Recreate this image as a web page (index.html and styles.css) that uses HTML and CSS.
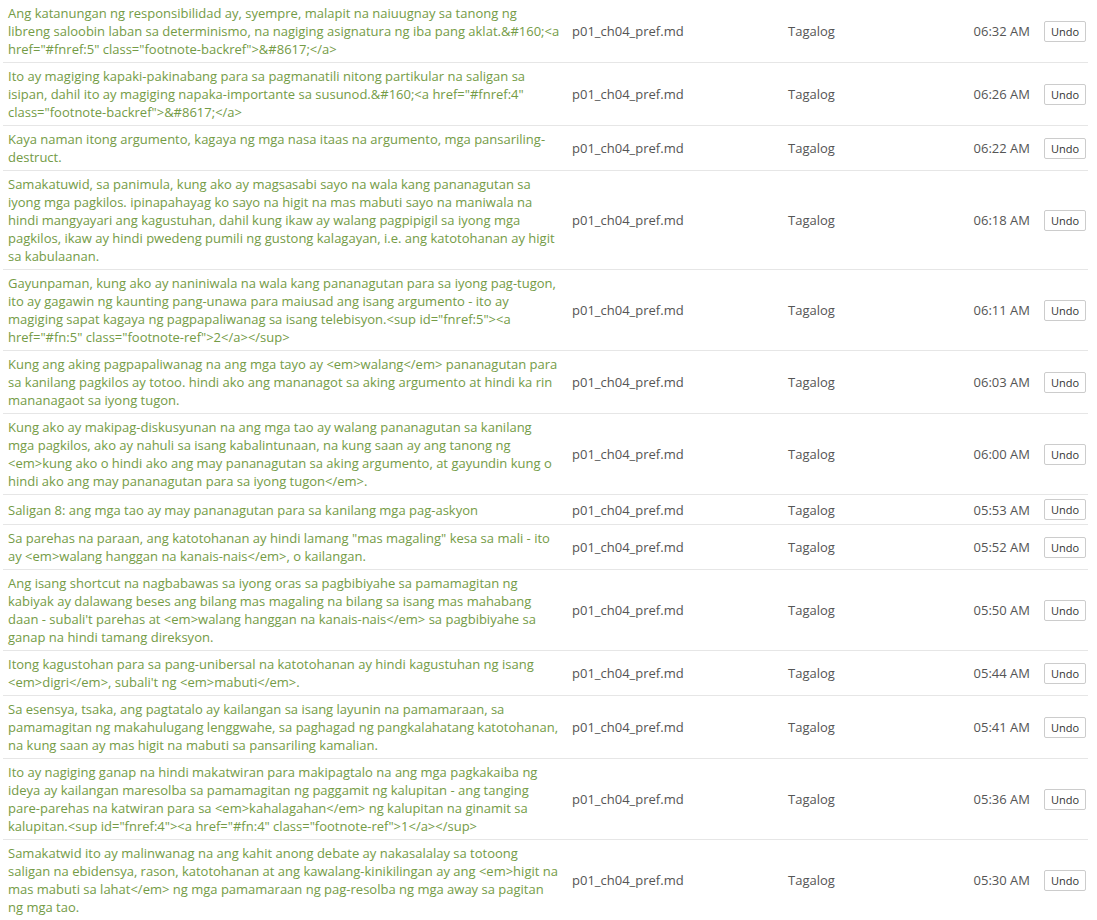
FILE: index.html
```html
<!DOCTYPE html>
<html lang="tl">
<head>
<meta charset="utf-8">
<title>History</title>
<link rel="stylesheet" href="styles.css">
</head>
<body>
<table class="history">
  <colgroup>
    <col class="c-text"><col class="c-file"><col class="c-lang"><col class="c-time"><col class="c-act">
  </colgroup>
  <tbody>
    <tr><td class="txt">Ang katanungan ng responsibilidad ay, syempre, malapit na naiuugnay sa tanong ng<br>libreng saloobin laban sa determinismo, na nagiging asignatura ng iba pang aklat.&amp;#160;&lt;a<br>href="#fnref:5" class="footnote-backref"&gt;&amp;#8617;&lt;/a&gt;</td><td>p01_ch04_pref.md</td><td>Tagalog</td><td class="time">06:32 AM</td><td class="act"><button class="undo">Undo</button></td></tr>
    <tr><td class="txt">Ito ay magiging kapaki-pakinabang para sa pagmanatili nitong partikular na saligan sa<br>isipan, dahil ito ay magiging napaka-importante sa susunod.&amp;#160;&lt;a href="#fnref:4"<br>class="footnote-backref"&gt;&amp;#8617;&lt;/a&gt;</td><td>p01_ch04_pref.md</td><td>Tagalog</td><td class="time">06:26 AM</td><td class="act"><button class="undo">Undo</button></td></tr>
    <tr><td class="txt">Kaya naman itong argumento, kagaya ng mga nasa itaas na argumento, mga pansariling-<br>destruct.</td><td>p01_ch04_pref.md</td><td>Tagalog</td><td class="time">06:22 AM</td><td class="act"><button class="undo">Undo</button></td></tr>
    <tr><td class="txt">Samakatuwid, sa panimula, kung ako ay magsasabi sayo na wala kang pananagutan sa<br>iyong mga pagkilos. ipinapahayag ko sayo na higit na mas mabuti sayo na maniwala na<br>hindi mangyayari ang kagustuhan, dahil kung ikaw ay walang pagpipigil sa iyong mga<br>pagkilos, ikaw ay hindi pwedeng pumili ng gustong kalagayan, i.e. ang katotohanan ay higit<br>sa kabulaanan.</td><td>p01_ch04_pref.md</td><td>Tagalog</td><td class="time">06:18 AM</td><td class="act"><button class="undo">Undo</button></td></tr>
    <tr><td class="txt">Gayunpaman, kung ako ay naniniwala na wala kang pananagutan para sa iyong pag-tugon,<br>ito ay gagawin ng kaunting pang-unawa para maiusad ang isang argumento - ito ay<br>magiging sapat kagaya ng pagpapaliwanag sa isang telebisyon.&lt;sup id="fnref:5"&gt;&lt;a<br>href="#fn:5" class="footnote-ref"&gt;2&lt;/a&gt;&lt;/sup&gt;</td><td>p01_ch04_pref.md</td><td>Tagalog</td><td class="time">06:11 AM</td><td class="act"><button class="undo">Undo</button></td></tr>
    <tr><td class="txt">Kung ang aking pagpapaliwanag na ang mga tayo ay &lt;em&gt;walang&lt;/em&gt; pananagutan para<br>sa kanilang pagkilos ay totoo. hindi ako ang mananagot sa aking argumento at hindi ka rin<br>mananagaot sa iyong tugon.</td><td>p01_ch04_pref.md</td><td>Tagalog</td><td class="time">06:03 AM</td><td class="act"><button class="undo">Undo</button></td></tr>
    <tr><td class="txt">Kung ako ay makipag-diskusyunan na ang mga tao ay walang pananagutan sa kanilang<br>mga pagkilos, ako ay nahuli sa isang kabalintunaan, na kung saan ay ang tanong ng<br>&lt;em&gt;kung ako o hindi ako ang may pananagutan sa aking argumento, at gayundin kung o<br>hindi ako ang may pananagutan para sa iyong tugon&lt;/em&gt;.</td><td>p01_ch04_pref.md</td><td>Tagalog</td><td class="time">06:00 AM</td><td class="act"><button class="undo">Undo</button></td></tr>
    <tr><td class="txt">Saligan 8: ang mga tao ay may pananagutan para sa kanilang mga pag-askyon</td><td>p01_ch04_pref.md</td><td>Tagalog</td><td class="time">05:53 AM</td><td class="act"><button class="undo">Undo</button></td></tr>
    <tr><td class="txt">Sa parehas na paraan, ang katotohanan ay hindi lamang "mas magaling" kesa sa mali - ito<br>ay &lt;em&gt;walang hanggan na kanais-nais&lt;/em&gt;, o kailangan.</td><td>p01_ch04_pref.md</td><td>Tagalog</td><td class="time">05:52 AM</td><td class="act"><button class="undo">Undo</button></td></tr>
    <tr><td class="txt">Ang isang shortcut na nagbabawas sa iyong oras sa pagbibiyahe sa pamamagitan ng<br>kabiyak ay dalawang beses ang bilang mas magaling na bilang sa isang mas mahabang<br>daan - subali't parehas at &lt;em&gt;walang hanggan na kanais-nais&lt;/em&gt; sa pagbibiyahe sa<br>ganap na hindi tamang direksyon.</td><td>p01_ch04_pref.md</td><td>Tagalog</td><td class="time">05:50 AM</td><td class="act"><button class="undo">Undo</button></td></tr>
    <tr><td class="txt">Itong kagustohan para sa pang-unibersal na katotohanan ay hindi kagustuhan ng isang<br>&lt;em&gt;digri&lt;/em&gt;, subali't ng &lt;em&gt;mabuti&lt;/em&gt;.</td><td>p01_ch04_pref.md</td><td>Tagalog</td><td class="time">05:44 AM</td><td class="act"><button class="undo">Undo</button></td></tr>
    <tr><td class="txt">Sa esensya, tsaka, ang pagtatalo ay kailangan sa isang layunin na pamamaraan, sa<br>pamamagitan ng makahulugang lenggwahe, sa paghagad ng pangkalahatang katotohanan,<br>na kung saan ay mas higit na mabuti sa pansariling kamalian.</td><td>p01_ch04_pref.md</td><td>Tagalog</td><td class="time">05:41 AM</td><td class="act"><button class="undo">Undo</button></td></tr>
    <tr><td class="txt">Ito ay nagiging ganap na hindi makatwiran para makipagtalo na ang mga pagkakaiba ng<br>ideya ay kailangan maresolba sa pamamagitan ng paggamit ng kalupitan - ang tanging<br>pare-parehas na katwiran para sa &lt;em&gt;kahalagahan&lt;/em&gt; ng kalupitan na ginamit sa<br>kalupitan.&lt;sup id="fnref:4"&gt;&lt;a href="#fn:4" class="footnote-ref"&gt;1&lt;/a&gt;&lt;/sup&gt;</td><td>p01_ch04_pref.md</td><td>Tagalog</td><td class="time">05:36 AM</td><td class="act"><button class="undo">Undo</button></td></tr>
    <tr><td class="txt">Samakatwid ito ay malinwanag na ang kahit anong debate ay nakasalalay sa totoong<br>saligan na ebidensya, rason, katotohanan at ang kawalang-kinikilingan ay ang &lt;em&gt;higit na<br>mas mabuti sa lahat&lt;/em&gt; ng mga pamamaraan ng pag-resolba ng mga away sa pagitan<br>ng mga tao.</td><td>p01_ch04_pref.md</td><td>Tagalog</td><td class="time">05:30 AM</td><td class="act"><button class="undo">Undo</button></td></tr>
  </tbody>
</table>
</body>
</html>
```
FILE: styles.css
```css
html, body {
  margin: 0;
  padding: 0;
  background: #ffffff;
}
body {
  padding: 0 9px 0 3px;
  font-family: "Open Sans", "Liberation Sans", sans-serif;
  font-size: 13px;
  line-height: 18px;
  color: #555555;
}
.history {
  width: 1085px;
  border-collapse: collapse;
  table-layout: fixed;
}
.c-text { width: 564px; }
.c-file { width: 216px; }
.c-lang { width: 150px; }
.c-time { width: 106px; }
.c-act { width: 49px; }
.history td {
  padding: 4px 5px;
  border-bottom: 1px solid #e6e6e6;
  vertical-align: middle;
  white-space: nowrap;
}
.history td.txt {
  color: #749b46;
  padding-right: 2px;
}
.history td.time {
  text-align: right;
  padding-right: 9px;
}
.history td.act {
  padding: 4px 4px 4px 5px;
}
.undo {
  display: block;
  height: 21px;
  padding: 0 6px;
  border: 1px solid #cccccc;
  border-radius: 2px;
  background: #ffffff;
  color: #333333;
  font-family: "Open Sans", "Liberation Sans", sans-serif;
  font-size: 11px;
  line-height: 19px;
}
```
